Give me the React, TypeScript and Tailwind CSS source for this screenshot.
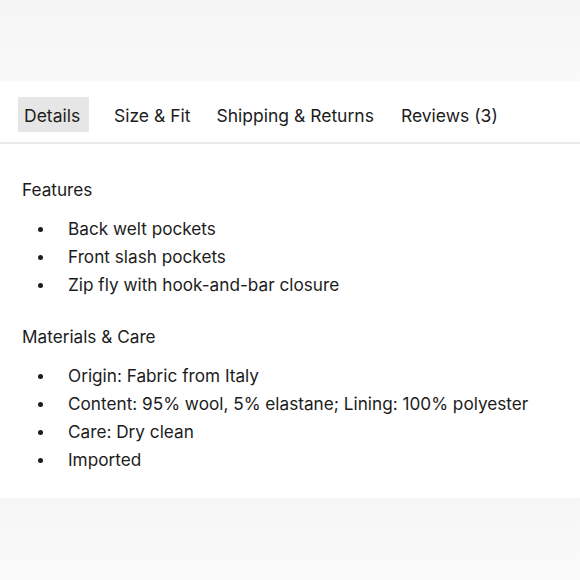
import React from "react";

const tabs = [
  { label: "Details", cls: "w-[71px] bg-[#e6e6e6]" },
  { label: "Size & Fit", cls: "ml-[19px]" },
  { label: "Shipping & Returns", cls: "ml-[14px]" },
  { label: "Reviews (3)", cls: "ml-[15px]" },
];

const sections = [
  {
    title: "Features",
    items: ["Back welt pockets", "Front slash pockets", "Zip fly with hook-and-bar closure"],
  },
  {
    title: "Materials & Care",
    items: [
      "Origin: Fabric from Italy",
      "Content: 95% wool, 5% elastane; Lining: 100% polyester",
      "Care: Dry clean",
      "Imported",
    ],
  },
];

export default function App() {
  return (
    <div
      className="w-[580px] h-[580px] flex flex-col bg-[#f7f7f7] text-[#1c1c1c] overflow-hidden"
      style={{ fontFamily: "Inter, 'Noto Sans', sans-serif" }}
    >
      <div className="h-[81px] bg-gradient-to-b from-[#f5f5f5] to-[#f9f9f9]" />
      <div className="h-[417px] bg-white">
        <div className="flex items-center px-[18px] pt-[16px] pb-[10px] border-b-2 border-[#ebebeb]">
          {tabs.map((t) => (
            <div
              key={t.label}
              className={"h-[35px] flex items-center pt-[3px] px-[6px] text-[17.5px] whitespace-nowrap " + t.cls}
            >
              {t.label}
            </div>
          ))}
        </div>
        <div className="px-[22px] pt-[32px]">
          {sections.map((s) => (
            <div key={s.title} className="mb-[24px]">
              <h3 className="text-[17.2px] leading-[28px] mb-[11px]">{s.title}</h3>
              <ul>
                {s.items.map((it) => (
                  <li key={it} className="flex items-center text-[17.2px] leading-[28px]">
                    <span className="w-[46px] pl-[16px] flex">
                      <span className="w-[5px] h-[5px] rounded-full bg-[#1c1c1c]" />
                    </span>
                    {it}
                  </li>
                ))}
              </ul>
            </div>
          ))}
        </div>
      </div>
      <div className="flex-1 bg-gradient-to-b from-[#f6f6f6] to-[#fafafa]" />
    </div>
  );
}
